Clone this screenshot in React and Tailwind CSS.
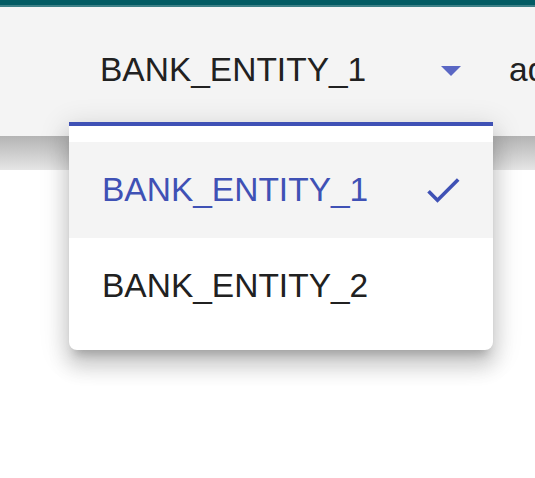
import React from 'react';

const options = ['BANK_ENTITY_1', 'BANK_ENTITY_2'];

function Check() {
  return (
    <svg width="44" height="44" viewBox="0 0 24 24" className="shrink-0">
      <path d="M9 16.17L4.83 12l-1.42 1.41L9 19 21 7l-1.41-1.41z" fill="#3f51b5" />
    </svg>
  );
}

export default function App() {
  const selected = 'BANK_ENTITY_1';

  return (
    <div className="relative h-[478px] w-[535px] overflow-hidden bg-white font-['Liberation_Sans',Arial,sans-serif] text-[#212121]">
      <div className="h-[5px] bg-[#035b63]" />
      <div className="h-[2px] bg-[#3e8087]" />

      <header className="flex h-[129px] items-center overflow-hidden bg-[#f4f4f4] pl-[100px]">
        <div className="w-[327px] shrink-0 whitespace-nowrap pb-[3px] text-[33.5px]">{selected}</div>
        <svg width="48" height="48" viewBox="0 0 24 24" className="-mt-[3px] shrink-0">
          <path d="M7 10l5 5 5-5z" fill="#5a67c4" />
        </svg>
        <div className="ml-[34px] shrink-0 whitespace-nowrap pb-[3px] text-[33.5px]">admin</div>
      </header>
      <div className="h-[34px] bg-gradient-to-b from-[#b4b4b4] to-[#e6e6e6]" />

      <div className="absolute left-[69px] top-[122px] w-[424px] rounded-b-lg border-t-4 border-[#3f51b5] bg-white py-4 shadow-[0_10px_10px_-6px_rgba(0,0,0,0.2),0_16px_20px_2px_rgba(0,0,0,0.14),0_6px_28px_4px_rgba(0,0,0,0.12)]">
        {options.map((opt) => {
          const active = opt === selected;
          return (
            <div
              key={opt}
              className={
                active
                  ? 'flex h-[96px] items-center justify-between bg-[#f4f4f4] pl-[33px] pr-[28px] text-[#3f51b5]'
                  : 'flex h-[96px] items-center justify-between pl-[33px] pr-[28px]'
              }
            >
              <span className="text-[33.5px]">{opt}</span>
              {active && <Check />}
            </div>
          );
        })}
      </div>
    </div>
  );
}
